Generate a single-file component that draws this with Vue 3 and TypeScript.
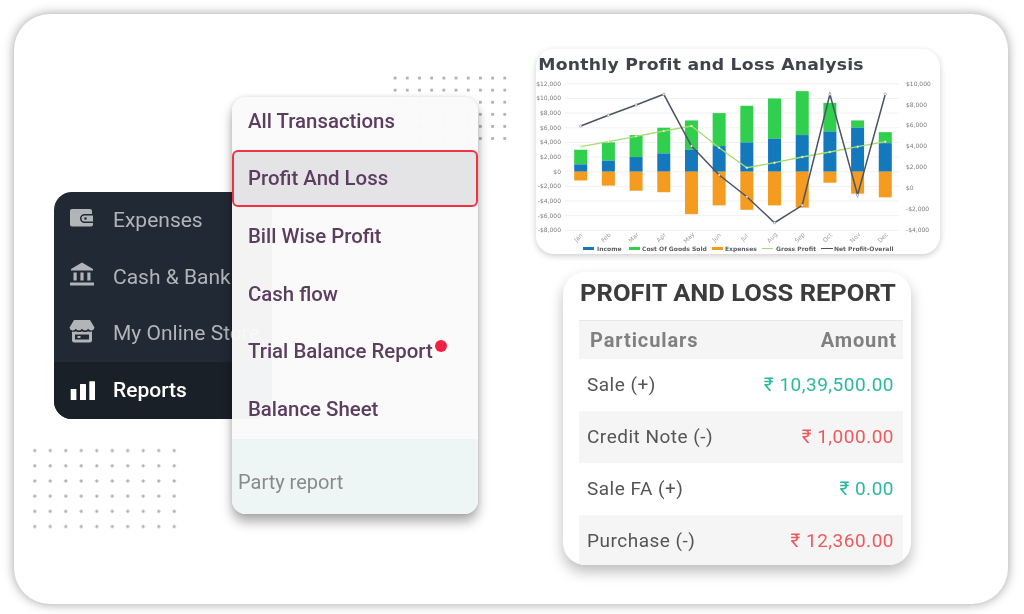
<script setup lang="ts">
interface NavItem {
  label: string
  icon: string
  active?: boolean
}

const navItems: NavItem[] = [
  { label: 'Expenses', icon: 'wallet' },
  { label: 'Cash & Bank', icon: 'bank' },
  { label: 'My Online Store', icon: 'store' },
  { label: 'Reports', icon: 'bars', active: true },
]

const menuItems = [
  { label: 'All Transactions' },
  { label: 'Profit And Loss', selected: true },
  { label: 'Bill Wise Profit' },
  { label: 'Cash flow' },
  { label: 'Trial Balance Report', dot: true },
  { label: 'Balance Sheet' },
]

const reportRows = [
  { name: 'Sale (+)', amount: '₹ 10,39,500.00', kind: 'pos' },
  { name: 'Credit Note (-)', amount: '₹ 1,000.00', kind: 'neg' },
  { name: 'Sale FA (+)', amount: '₹ 0.00', kind: 'pos' },
  { name: 'Purchase (-)', amount: '₹ 12,360.00', kind: 'neg' },
]

// chart coordinates are page pixels, the viewBox starts at the card's corner
const months = ['Jan', 'Feb', 'Mar', 'Apr', 'May', 'Jun', 'Jul', 'Aug', 'Sep', 'Oct', 'Nov', 'Dec']
const income = [1000, 1500, 2000, 2500, 3000, 3500, 4000, 4500, 5000, 5500, 6000, 3900]
const goodsTop = [3000, 4000, 5000, 6000, 7000, 8000, 9000, 10000, 11000, 9400, 7000, 5400]
const expenses = [1200, 1900, 2600, 2800, 5800, 4600, 5200, 4600, 4900, 1500, 3000, 3500]
const grossY = [146.7, 141.7, 136.3, 131, 126, 147.7, 167.7, 162.7, 157, 152, 146.7, 141.7]
const netY = [126, 115.3, 105, 94.3, 146, 175, 196.7, 222.7, 205.3, 94.3, 195, 94.3]

const zeroY = 171.7
const perUnit = 14.65 / 2000
const barW = 13
const colX = (i: number) => 580.7 + i * 27.69
const valY = (v: number) => zeroY - v * perUnit

const leftTicks = [12000, 10000, 8000, 6000, 4000, 2000, 0, -2000, -4000, -6000, -8000]
const rightTicks = [10000, 8000, 6000, 4000, 2000, 0, -2000, -4000]
const money = (v: number) => (v < 0 ? '-' : '') + '$' + Math.abs(v).toLocaleString('en-US')
const rightY = (i: number) => 83.7 + i * 20.87

const linePoints = (ys: number[]) => ys.map((y, i) => `${colX(i)},${y}`).join(' ')

const legend = [
  { label: 'Income', color: '#1478bd', x: 583, w: 11, tx: 597, line: false },
  { label: 'Cost Of Goods Sold', color: '#30cf4e', x: 629, w: 11, tx: 642, line: false },
  { label: 'Expenses', color: '#f49b20', x: 712, w: 11, tx: 725, line: false },
  { label: 'Gross Profit', color: '#a4dc70', x: 762, w: 11, tx: 776, line: true },
  { label: 'Net Profit-Overall', color: '#4a5563', x: 821, w: 12, tx: 834, line: true },
]
</script>

<template>
  <div class="page">
    <div class="frame">
      <div class="dots dots-top"></div>
      <div class="dots dots-bottom"></div>

      <nav class="sidebar">
        <a v-for="item in navItems" :key="item.label" class="nav-item" :class="{ active: item.active }">
          <svg class="nav-icon" :class="{ flat: item.active }" viewBox="0 0 26 24" fill="currentColor">
            <template v-if="item.icon === 'wallet'">
              <path d="M3 3h18a2 2 0 0 1 2 2v3h-7.500a4.500 4.500 0 0 0 0 9H24v1.500a2 2 0 0 1-2 2H3a2 2 0 0 1-2-2V5a2 2 0 0 1 2-2z" />
              <path fill-rule="evenodd" d="M15.500 9.500H24v6h-8.500a3 3 0 0 1 0-6zm1 1.700a1.300 1.300 0 1 0 0 2.600 1.300 1.300 0 0 0 0-2.600z" />
            </template>
            <template v-else-if="item.icon === 'bank'">
              <path d="M13 0.500 24 7v1.500H2V7z" />
              <path d="M4.500 10.500h3.200v8H4.500zM11.400 10.500h3.200v8h-3.200zM18.300 10.500h3.200v8h-3.200z" />
              <rect x="1" y="20.500" width="24" height="3" rx="0.500" />
            </template>
            <template v-else-if="item.icon === 'store'">
              <path d="M5 1h16l4.500 7.500a3.400 3.400 0 0 1-6.300 1.300 3.700 3.700 0 0 1-6.200 0 3.700 3.700 0 0 1-6.200 0A3.400 3.400 0 0 1 .5 8.500z" />
              <path fill-rule="evenodd" d="M3 12.500c1.500.600 3 .400 4-.300 1.800 1.200 4.200 1.200 6 0 1.800 1.200 4.200 1.200 6 0 1 .7 2.500.9 4 .3V21a2.500 2.500 0 0 1-2.500 2.500h-15A2.500 2.500 0 0 1 3 21zM6 15.500v5h14v-5zm2.500 1.500h3v2h-3z" />
            </template>
            <template v-else>
              <rect x="1.700" y="11" width="5.700" height="11" rx="0.600" />
              <rect x="11" y="6" width="6" height="16" rx="0.600" />
              <rect x="20.300" y="3.300" width="5.700" height="18.700" rx="0.600" />
            </template>
          </svg>
          <span class="nav-label">{{ item.label }}</span>
        </a>
      </nav>

      <div class="menu">
        <ul class="menu-list">
          <li v-for="item in menuItems" :key="item.label" class="menu-item" :class="{ selected: item.selected }">
            {{ item.label }}<span v-if="item.dot" class="red-dot"></span>
          </li>
        </ul>
        <div class="menu-footer">Party report</div>
      </div>

      <section class="chart-card">
        <h3 class="chart-title">Monthly Profit and Loss Analysis</h3>
        <svg class="chart" viewBox="536 79 404 175" width="404" height="175">
          <line v-for="t in leftTicks" :key="t" x1="565" x2="899" :y1="valY(t)" :y2="valY(t)" stroke="#f1f1f1" stroke-width="1" />
          <text v-for="t in leftTicks" :key="'l' + t" x="561" :y="valY(t) + 2" text-anchor="end" class="tick">{{ money(t) }}</text>
          <text v-for="(t, i) in rightTicks" :key="'r' + t" x="906" :y="rightY(i) + 2" class="tick">{{ money(t) }}</text>

          <g v-for="(m, i) in months" :key="m">
            <rect :x="colX(i) - barW / 2" :y="valY(goodsTop[i])" :width="barW" :height="(goodsTop[i] - income[i]) * perUnit" fill="#30cf4e" />
            <rect :x="colX(i) - barW / 2" :y="valY(income[i])" :width="barW" :height="income[i] * perUnit" fill="#1478bd" />
            <rect :x="colX(i) - barW / 2" :y="zeroY" :width="barW" :height="expenses[i] * perUnit" fill="#f49b20" />
            <text :transform="`translate(${colX(i) - 1} 239) rotate(-45)`" text-anchor="middle" class="tick month">{{ m }}</text>
          </g>

          <polyline :points="linePoints(grossY)" fill="none" stroke="#a4dc70" stroke-width="1.300" />
          <polyline :points="linePoints(netY)" fill="none" stroke="#4a5563" stroke-width="1.500" />
          <circle v-for="(y, i) in grossY" :key="'g' + i" :cx="colX(i)" :cy="y" r="1" fill="#fff" stroke="#a4dc70" stroke-width="0.400" />
          <circle v-for="(y, i) in netY" :key="'n' + i" :cx="colX(i)" :cy="y" r="1.200" fill="#fff" stroke="#4a5563" stroke-width="0.400" />

          <g v-for="l in legend" :key="l.label">
            <line v-if="l.line" :x1="l.x" :x2="l.x + l.w" y1="248.500" y2="248.500" :stroke="l.color" stroke-width="1.200" />
            <rect v-else :x="l.x" y="247" :width="l.w" height="3" :fill="l.color" />
            <text :x="l.tx" y="251" class="legend-text">{{ l.label }}</text>
          </g>
        </svg>
      </section>

      <section class="report-card">
        <h2 class="report-title">PROFIT AND LOSS REPORT</h2>
        <div class="report-table">
          <div class="report-head">
            <span>Particulars</span>
            <span>Amount</span>
          </div>
          <div v-for="row in reportRows" :key="row.name" class="report-row">
            <span>{{ row.name }}</span>
            <span class="amount" :class="row.kind">{{ row.amount }}</span>
          </div>
        </div>
      </section>
    </div>
  </div>
</template>

<style scoped>
.page {
  width: 1024px;
  height: 614px;
  padding: 14px 16px 10px 14px;
  box-sizing: border-box;
  overflow: hidden;
  background: #fff;
  font-family: Roboto, "Liberation Sans", sans-serif;
}

.frame {
  position: relative;
  height: 100%;
  border-radius: 36px;
  background: #fff;
  box-shadow: 0 0 11px rgba(0, 0, 0, 0.38);
  filter: blur(0.4px);
}

.dots {
  position: absolute;
  background-image: radial-gradient(circle, #b0b0b8 1.300px, transparent 1.800px);
}

.dots-top {
  left: 375px;
  top: 58px;
  width: 122px;
  height: 73px;
  background-size: 12.200px 12.100px;
}

.dots-bottom {
  left: 12.500px;
  top: 429.400px;
  width: 155px;
  height: 91.200px;
  background-size: 15.500px 15.200px;
}

.sidebar {
  position: absolute;
  left: 40px;
  top: 178px;
  width: 218px;
  height: 227px;
  display: flex;
  flex-direction: column;
  overflow: hidden;
  border-radius: 18px;
  background: #212934;
  color: #b2b5b8;
}

.nav-item {
  flex: 0 0 56.500px;
  display: flex;
  align-items: center;
  padding-left: 15px;
  white-space: nowrap;
  font-size: 21px;
}

.nav-item.active {
  flex: 1;
  background: #1a2027;
  color: #fff;
  font-weight: 500;
}

.nav-icon {
  flex: none;
  width: 26px;
  height: 24px;
  margin: -5px 18px 0 0;
}

.nav-icon.flat {
  margin-top: 0;
}

.menu {
  position: absolute;
  left: 218px;
  top: 83px;
  width: 246px;
  height: 417px;
  display: flex;
  flex-direction: column;
  overflow: hidden;
  border-radius: 14px;
  background: rgba(250, 250, 251, 0.97);
  box-shadow: 0 8px 12px rgba(0, 0, 0, 0.32), 0 0 5px rgba(0, 0, 0, 0.12);
}

.menu-list {
  flex: 1;
  margin: -5px 0 0;
  padding: 0;
  list-style: none;
}

.menu-item {
  height: 57.600px;
  display: flex;
  align-items: center;
  padding-left: 16px;
  box-sizing: border-box;
  font-size: 20.400px;
  font-weight: 500;
  color: #5b3d5e;
}

.menu-item.selected {
  border: 2px solid #ef3340;
  border-radius: 6px;
  padding-left: 14px;
  background: #e4e4e7;
}

.red-dot {
  width: 12px;
  height: 12px;
  margin: -10px 0 0 2px;
  border-radius: 50%;
  background: #f01f44;
}

.menu-footer {
  flex: 0 0 75px;
  display: flex;
  align-items: center;
  padding: 10px 0 0 6px;
  box-sizing: border-box;
  background: #edf6f5;
  color: #8a8a8a;
  font-size: 20px;
}

.chart-card {
  position: absolute;
  left: 522px;
  top: 35px;
  width: 404px;
  height: 205px;
  overflow: hidden;
  border-radius: 18px;
  background: #fff;
  box-shadow: 0 2px 6px rgba(0, 0, 0, 0.2);
}

.chart-title {
  height: 30px;
  margin: 0;
  padding: 1px 0 0 2px;
  box-sizing: border-box;
  line-height: 30px;
  font-family: "DejaVu Sans", sans-serif;
  font-size: 15px;
  font-weight: 700;
  letter-spacing: 0.2px;
  white-space: nowrap;
  color: #3f444b;
  transform: scaleX(1.15);
  transform-origin: left center;
}

.chart {
  display: block;
}

.tick {
  font-family: "DejaVu Sans", sans-serif;
  font-size: 6px;
  fill: #7a7a7a;
}

.tick.month {
  fill: #9a9a9a;
}

.legend-text {
  font-family: "DejaVu Sans", sans-serif;
  font-size: 6px;
  font-weight: 700;
  fill: #5a5f66;
}

.report-card {
  position: absolute;
  left: 549px;
  top: 258px;
  width: 348px;
  height: 293px;
  display: flex;
  flex-direction: column;
  overflow: hidden;
  padding: 0 8px 0 16px;
  box-sizing: border-box;
  border-radius: 22px;
  background: #fff;
  box-shadow: 0 7px 14px rgba(0, 0, 0, 0.26);
}

.report-title {
  flex: 0 0 48px;
  margin: 0;
  padding-left: 1px;
  line-height: 43px;
  font-size: 23px;
  font-weight: 700;
  white-space: nowrap;
  color: #3c3c3c;
  transform: scaleX(1.11);
  transform-origin: left center;
}

.report-table {
  flex: 1;
  display: flex;
  flex-direction: column;
  border-top: 1px solid #e8e8e8;
}

.report-head {
  flex: 0 0 38px;
  display: flex;
  align-items: center;
  justify-content: space-between;
  padding: 0 6px 0 11px;
  background: #f5f5f5;
  font-size: 20px;
  font-weight: 700;
  letter-spacing: 0.9px;
  color: #808080;
}

.report-row {
  flex: 0 0 52px;
  display: flex;
  align-items: center;
  justify-content: space-between;
  padding: 0 9px 2px 8px;
  box-sizing: border-box;
  font-size: 19px;
  letter-spacing: 0.5px;
  color: #555;
}

.report-row:nth-child(odd) {
  background: #f5f5f5;
}

.amount.pos {
  color: #2bb8a0;
}

.amount.neg {
  color: #ec5a5f;
}
</style>

<style>
html,
body {
  margin: 0;
  background: #fff;
}
</style>
